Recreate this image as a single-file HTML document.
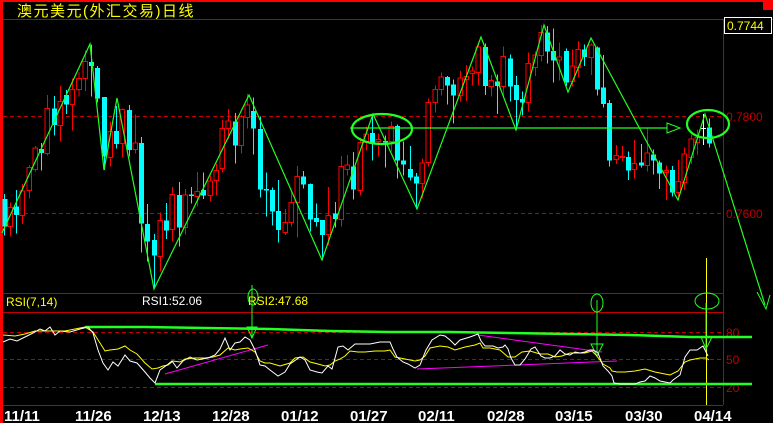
<!DOCTYPE html>
<html><head><meta charset="utf-8"><style>
html,body{margin:0;padding:0;background:#000;width:773px;height:423px;overflow:hidden}
svg{display:block}
svg *{vector-effect:non-scaling-stroke}
text{font-family:"Liberation Sans","Noto Sans CJK SC",sans-serif}
</style></head><body>
<svg width="773" height="423" viewBox="0 0 773 423" xmlns="http://www.w3.org/2000/svg" shape-rendering="crispEdges">
<rect width="773" height="423" fill="#000"/>
<rect x="0" y="0" width="773" height="2" fill="#f00"/>
<rect x="0" y="0" width="3" height="423" fill="#f00"/>
<rect x="763" y="0" width="10" height="10" fill="#f00"/>
<text x="17" y="16" font-size="15" letter-spacing="1.5" fill="#ff0">澳元美元(外汇交易)日线</text>
<g stroke="#c00000" stroke-width="1">
<line x1="3" y1="19.5" x2="773" y2="19.5"/>
<line x1="723.5" y1="19" x2="723.5" y2="405"/>
<line x1="3" y1="293.5" x2="723" y2="293.5"/>
<line x1="3" y1="312.5" x2="723" y2="312.5"/>
<line x1="3" y1="405.5" x2="723" y2="405.5"/>
</g>
<g stroke="#c00000" stroke-width="1" stroke-dasharray="4,3">
<line x1="3" y1="116.5" x2="723" y2="116.5"/>
<line x1="3" y1="213.5" x2="723" y2="213.5"/>
<line x1="3" y1="332.5" x2="723" y2="332.5"/>
<line x1="3" y1="359.5" x2="723" y2="359.5"/>
<line x1="3" y1="387.5" x2="723" y2="387.5"/>
</g>
<rect x="724.5" y="17.5" width="47" height="16" fill="#000" stroke="#fff"/>
<text x="727" y="30" font-size="12" fill="#ff0">0.7744</text>
<text x="726" y="121" font-size="12" fill="#c00000">0.7800</text>
<text x="726" y="218" font-size="12" fill="#c00000">0.7600</text>
<text x="726" y="337" font-size="12" fill="#c00000">80</text>
<text x="726" y="364" font-size="12" fill="#c00000">50</text>
<text x="726" y="392" font-size="12" fill="#c00000">20</text>

<g transform="translate(0,15) scale(0.33333)">
<path stroke="#f00" fill="none" d="M31 563V665 M67 507V627 M88 450V550 M106 393V470 M142 240V422 M181 213V380 M217 190V347 M237 171V245 M256 107V228 M331 320V455 M367 280V427 M406 299V416 M481 592V770 M517 516V680 M556 522V658 M592 471V574 M631 481V560 M649 446V542 M667 315V472 M685 282V372 M724 300V415 M742 237V340"/>
<g stroke="#f00" fill="#000">
<rect x="24" y="577" width="14" height="58"/><rect x="60" y="528" width="14" height="74"/><rect x="81" y="457" width="14" height="70"/><rect x="99" y="399" width="14" height="64"/><rect x="135" y="280" width="14" height="135"/><rect x="174" y="259" width="14" height="72"/><rect x="210" y="223" width="14" height="45"/><rect x="230" y="190" width="14" height="33"/><rect x="249" y="139" width="14" height="51"/><rect x="324" y="350" width="14" height="78"/><rect x="360" y="283" width="14" height="102"/><rect x="399" y="384" width="14" height="20"/><rect x="474" y="616" width="14" height="108"/><rect x="510" y="538" width="14" height="105"/><rect x="549" y="540" width="14" height="98"/><rect x="585" y="529" width="14" height="16"/><rect x="624" y="498" width="14" height="44"/><rect x="642" y="466" width="14" height="31"/><rect x="660" y="340" width="14" height="120"/><rect x="678" y="318" width="14" height="22"/><rect x="717" y="305" width="14" height="87"/><rect x="735" y="270" width="14" height="37"/>
</g>
<path stroke="#0ff" fill="none" d="M14 537V662 M49 525V655 M124 384V467 M163 243V362 M199 225V297 M274 88V245 M292 153V262 M313 246V465 M349 273V400 M388 270V425 M424 366V712 M442 567V740 M463 657V820 M499 564V672 M538 501V695 M574 516V565 M610 473V552 M706 294V446"/>
<g fill="#0ff">
<rect x="7" y="552" width="15" height="83"/><rect x="42" y="575" width="15" height="25"/><rect x="117" y="402" width="15" height="12"/><rect x="156" y="280" width="15" height="50"/><rect x="192" y="240" width="15" height="29"/><rect x="267" y="141" width="15" height="12"/><rect x="285" y="159" width="15" height="92"/><rect x="306" y="246" width="15" height="179"/><rect x="342" y="348" width="15" height="39"/><rect x="381" y="285" width="15" height="120"/><rect x="417" y="384" width="15" height="242"/><rect x="435" y="627" width="15" height="53"/><rect x="456" y="675" width="15" height="47"/><rect x="492" y="616" width="15" height="31"/><rect x="531" y="540" width="15" height="98"/><rect x="567" y="538" width="15" height="5"/><rect x="603" y="525" width="15" height="17"/><rect x="699" y="320" width="15" height="72"/>
</g>
</g>

<g transform="translate(240,15) scale(0.33333)">
<path stroke="#f00" fill="none" d="M136 582V660 M154 532V634 M172 453V668 M265 516V690 M304 423V635 M322 420V481 M361 368V542 M379 335V407 M415 355V425 M454 320V410 M547 430V550 M565 250V455 M586 211V292 M604 172V241 M661 168V260 M679 150V258 M697 155V212 M715 86V210"/>
<g stroke="#f00" fill="#000">
<rect x="129" y="622" width="14" height="31"/><rect x="147" y="562" width="14" height="60"/><rect x="165" y="484" width="14" height="78"/><rect x="258" y="601" width="14" height="58"/><rect x="297" y="454" width="14" height="160"/><rect x="315" y="450" width="14" height="14"/><rect x="354" y="382" width="14" height="145"/><rect x="372" y="357" width="14" height="25"/><rect x="408" y="373" width="14" height="7"/><rect x="447" y="334" width="14" height="46"/><rect x="540" y="444" width="14" height="62"/><rect x="558" y="262" width="14" height="180"/><rect x="579" y="223" width="14" height="39"/><rect x="597" y="186" width="14" height="37"/><rect x="654" y="189" width="14" height="52"/><rect x="672" y="185" width="14" height="8"/><rect x="690" y="168" width="14" height="7"/><rect x="708" y="96" width="14" height="76"/>
</g>
<path stroke="#0ff" fill="none" d="M40 248V418 M61 305V548 M79 473V605 M97 517V632 M115 495V683 M190 468V520 M211 505V650 M229 565V635 M247 615V735 M286 561V637 M340 411V554 M397 300V437 M436 362V457 M472 328V490 M490 380V481 M511 393V497 M529 474V582 M622 183V268 M640 193V325 M736 85V240"/>
<g fill="#0ff">
<rect x="33" y="288" width="15" height="53"/><rect x="54" y="342" width="15" height="182"/><rect x="72" y="522" width="15" height="5"/><rect x="90" y="525" width="15" height="65"/><rect x="108" y="588" width="15" height="57"/><rect x="183" y="484" width="15" height="25"/><rect x="204" y="507" width="15" height="107"/><rect x="222" y="609" width="15" height="12"/><rect x="240" y="615" width="15" height="45"/><rect x="279" y="595" width="15" height="17"/><rect x="333" y="454" width="15" height="70"/><rect x="390" y="354" width="15" height="30"/><rect x="429" y="378" width="15" height="4"/><rect x="465" y="333" width="15" height="104"/><rect x="483" y="436" width="15" height="13"/><rect x="504" y="462" width="15" height="26"/><rect x="522" y="485" width="15" height="21"/><rect x="615" y="186" width="15" height="26"/><rect x="633" y="209" width="15" height="33"/><rect x="729" y="96" width="15" height="117"/>
</g>
</g>

<g transform="translate(480,15) scale(0.33333)">
<path stroke="#f00" fill="none" d="M34 180V245 M70 94V245 M145 112V290 M166 110V183 M184 30V140 M238 82V197 M277 103V215 M295 78V188 M334 85V180 M409 390V447 M427 393V438 M463 375V490 M502 340V470 M559 452V555 M595 435V555 M613 397V525 M634 358V447 M652 343V420"/>
<g stroke="#f00" fill="#000">
<rect x="27" y="196" width="14" height="19"/><rect x="63" y="124" width="14" height="90"/><rect x="138" y="145" width="14" height="118"/><rect x="159" y="120" width="14" height="38"/><rect x="177" y="52" width="14" height="70"/><rect x="231" y="126" width="14" height="9"/><rect x="270" y="153" width="14" height="47"/><rect x="288" y="103" width="14" height="55"/><rect x="327" y="90" width="14" height="37"/><rect x="402" y="421" width="14" height="12"/><rect x="420" y="424" width="14" height="4"/><rect x="456" y="445" width="14" height="19"/><rect x="495" y="414" width="14" height="38"/><rect x="552" y="467" width="14" height="6"/><rect x="588" y="499" width="14" height="34"/><rect x="606" y="417" width="14" height="85"/><rect x="627" y="372" width="14" height="55"/><rect x="645" y="367" width="14" height="15"/>
</g>
<path stroke="#0ff" fill="none" d="M52 178V297 M91 118V260 M109 183V345 M127 230V302 M202 33V145 M220 40V203 M259 100V213 M313 88V153 M352 95V242 M370 120V278 M388 255V455 M445 410V495 M484 387V458 M520 404V478 M538 437V522 M577 453V545 M688 310V398"/>
<g fill="#0ff">
<rect x="45" y="199" width="15" height="14"/><rect x="84" y="130" width="15" height="85"/><rect x="102" y="210" width="15" height="45"/><rect x="120" y="252" width="15" height="11"/><rect x="195" y="52" width="15" height="58"/><rect x="213" y="108" width="15" height="29"/><rect x="252" y="108" width="15" height="95"/><rect x="306" y="103" width="15" height="23"/><rect x="345" y="98" width="15" height="126"/><rect x="363" y="218" width="15" height="49"/><rect x="381" y="264" width="15" height="173"/><rect x="438" y="426" width="15" height="41"/><rect x="477" y="443" width="15" height="8"/><rect x="513" y="418" width="15" height="19"/><rect x="531" y="442" width="15" height="34"/><rect x="570" y="465" width="15" height="67"/><rect x="681" y="337" width="15" height="49"/>
</g>
<path stroke="#fff" fill="none" d="M670 297V390 M662 340H678"/>
</g>

<line x1="706.5" y1="258" x2="706.5" y2="405" stroke="#ff0" stroke-width="1"/>

<g fill="none" stroke="#2f2" shape-rendering="auto">
<polyline stroke-width="1.2" points="2,233 90,44 104,170 117,98 154,289 249,95 322,260 373,114 417,209 481,37 516,130 544,25 568,92 591,38 678,200 705,114 765,305"/>
<line x1="350" y1="128" x2="667" y2="128" stroke-width="1.2"/>
<path d="M667 123 L680 128 L667 133 Z" stroke-width="1"/>
<path d="M757 292 L766 309 L770 295" stroke-width="1"/>
<ellipse cx="382" cy="129" rx="30" ry="15" stroke-width="2.2"/>
<ellipse cx="708" cy="124" rx="21" ry="14" stroke-width="2.2"/>
<polyline stroke-width="2.5" points="85,327 145,327 205,328 270,329 330,331 390,332 450,332 510,333 570,334 630,335 690,337 752,337"/>
<line x1="155" y1="384" x2="752" y2="384" stroke-width="2.5"/>
<line x1="252" y1="285" x2="252" y2="337" stroke-width="1"/>
<ellipse cx="253" cy="297" rx="5" ry="8" stroke-width="1"/>
<path d="M247 327 L257 327 L252 338 Z" stroke-width="1"/>
<line x1="597" y1="300" x2="597" y2="352" stroke-width="1"/>
<ellipse cx="597" cy="303" rx="6" ry="9" stroke-width="1"/>
<path d="M591 344 L603 344 L597 356 Z" stroke-width="1"/>
<line x1="706" y1="303" x2="706" y2="347" stroke-width="1"/>
<ellipse cx="707" cy="301" rx="12" ry="8" stroke-width="1"/>
<path d="M701 337 L712 337 L706 349 Z" stroke-width="1"/>
</g>
<g stroke="#f0f" stroke-width="1" shape-rendering="auto">
<line x1="165" y1="374" x2="268" y2="345"/>
<line x1="478" y1="335" x2="602" y2="352"/>
<line x1="417" y1="369" x2="617" y2="361"/>
</g>
<g fill="none" stroke-width="1" shape-rendering="auto">
<polyline stroke="#ff0" points="3,335 15,336 25,334 35,331 45,331 55,331 65,331 75,329 85,327 93,332 100,343 105,351 110,350 118,349 125,346 130,350 137,354 145,363 152,369 158,368 163,366 168,365 173,361 180,362 185,359 195,358 205,358 213,357 220,355 228,348 235,350 240,349 248,348 255,352 260,361 265,363 270,363 280,366 290,363 295,358 303,357 310,362 318,364 325,366 330,365 335,361 340,359 345,356 350,351 358,352 365,352 375,351 385,351 390,350 395,357 405,359 415,361 420,360 425,356 430,348 440,346 448,347 455,350 465,347 475,345 480,343 483,348 490,348 500,350 508,357 515,357 522,352 530,351 540,354 548,354 555,357 562,356 570,353 578,353 585,353 592,351 596,355 603,364 610,368 612,371 617,372 625,372 635,371 645,369 655,372 665,374 670,375 678,371 685,362 690,360 700,358 706,358 709,360"/>
<polyline stroke="#fff" points="3,342 10,339 17,341 27,336 33,333 40,329 45,331 50,327 55,335 60,331 70,332 80,329 88,327 93,333 98,350 103,363 108,370 113,362 118,366 125,355 130,361 137,363 145,372 150,378 155,383 160,370 167,365 172,361 177,368 183,361 190,357 197,360 208,358 215,355 220,349 225,338 230,350 235,343 240,342 245,337 250,340 255,350 260,365 265,366 270,370 278,376 285,372 290,364 300,357 305,360 310,370 317,372 322,373 328,366 332,369 338,347 343,346 348,350 355,344 362,344 370,344 375,343 380,342 390,342 393,349 397,357 403,362 408,364 415,368 420,365 426,350 432,340 440,335 445,336 450,340 455,345 460,340 470,337 478,334 481,341 485,346 493,346 498,348 503,347 505,345 508,349 511,358 515,365 520,365 525,359 531,349 535,347 541,356 545,358 550,358 555,356 560,350 565,354 570,355 575,352 580,353 585,352 590,350 593,350 598,353 603,366 608,371 612,376 614,383 620,384 627,384 635,384 640,382 645,381 650,376 655,378 660,381 665,382 670,383 673,380 680,375 685,357 690,350 697,350 703,346 708,356"/>
</g>
<text x="6" y="306" font-size="12" fill="#ff0">RSI(7,14)</text>
<text x="142" y="305" font-size="12" fill="#fff">RSI1:52.06</text>
<text x="248" y="305" font-size="12" fill="#ff0">RSI2:47.68</text>
<g font-size="15" font-weight="bold" fill="#fff">
<text x="4" y="421">11/11</text>
<text x="75" y="421">11/26</text>
<text x="143" y="421">12/13</text>
<text x="212" y="421">12/28</text>
<text x="281" y="421">01/12</text>
<text x="350" y="421">01/27</text>
<text x="418" y="421">02/11</text>
<text x="487" y="421">02/28</text>
<text x="555" y="421">03/15</text>
<text x="625" y="421">03/30</text>
<text x="694" y="421">04/14</text>
</g>
</svg>
</body></html>
